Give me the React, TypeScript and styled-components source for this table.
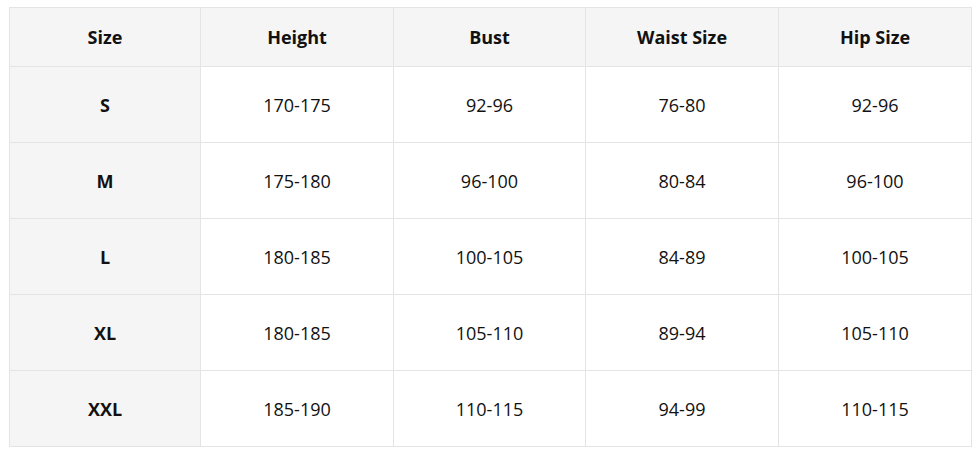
import React from "react";
import styled, { createGlobalStyle } from "styled-components";

const GlobalStyle = createGlobalStyle`
  body {
    margin: 0;
    background: #ffffff;
    font-family: "Open Sans", "Noto Sans", Arial, sans-serif;
  }
`;

const columns = ["Size", "Height", "Bust", "Waist Size", "Hip Size"];
const widths = [191, 193, 192, 193, 193];

const rows = [
  ["S", "170-175", "92-96", "76-80", "92-96"],
  ["M", "175-180", "96-100", "80-84", "96-100"],
  ["L", "180-185", "100-105", "84-89", "100-105"],
  ["XL", "180-185", "105-110", "89-94", "105-110"],
  ["XXL", "185-190", "110-115", "94-99", "110-115"],
];

export default function App() {
  return (
    <>
      <GlobalStyle />
      <Page>
        <SizeTable>
          <colgroup>
            {widths.map((w, i) => (
              <col key={i} style={{ width: w }} />
            ))}
          </colgroup>
          <thead>
            <tr>
              {columns.map((c) => (
                <HeadCell key={c}>{c}</HeadCell>
              ))}
            </tr>
          </thead>
          <tbody>
            {rows.map((r) => (
              <tr key={r[0]}>
                {r.map((v, i) => (
                  <Cell key={i} $label={i === 0}>
                    {v}
                  </Cell>
                ))}
              </tr>
            ))}
          </tbody>
        </SizeTable>
      </Page>
    </>
  );
}

const Page = styled.div`
  padding: 7px 8px 0 9px;
`;

const SizeTable = styled.table`
  width: 963px;
  border-collapse: collapse;
  table-layout: fixed;
  color: #111111;
`;

const HeadCell = styled.th`
  height: 58px;
  padding: 0;
  background: #f5f5f5;
  border: 1px solid #e4e4e4;
  font-size: 18px;
  font-weight: 700;
  text-align: center;
  vertical-align: middle;
`;

const Cell = styled.td<{ $label?: boolean }>`
  height: 75px;
  padding: 0;
  border: 1px solid #e4e4e4;
  background: ${({ $label }) => ($label ? "#f5f5f5" : "#ffffff")};
  font-size: 18px;
  font-weight: ${({ $label }) => ($label ? 700 : 400)};
  text-align: center;
  vertical-align: middle;
`;
